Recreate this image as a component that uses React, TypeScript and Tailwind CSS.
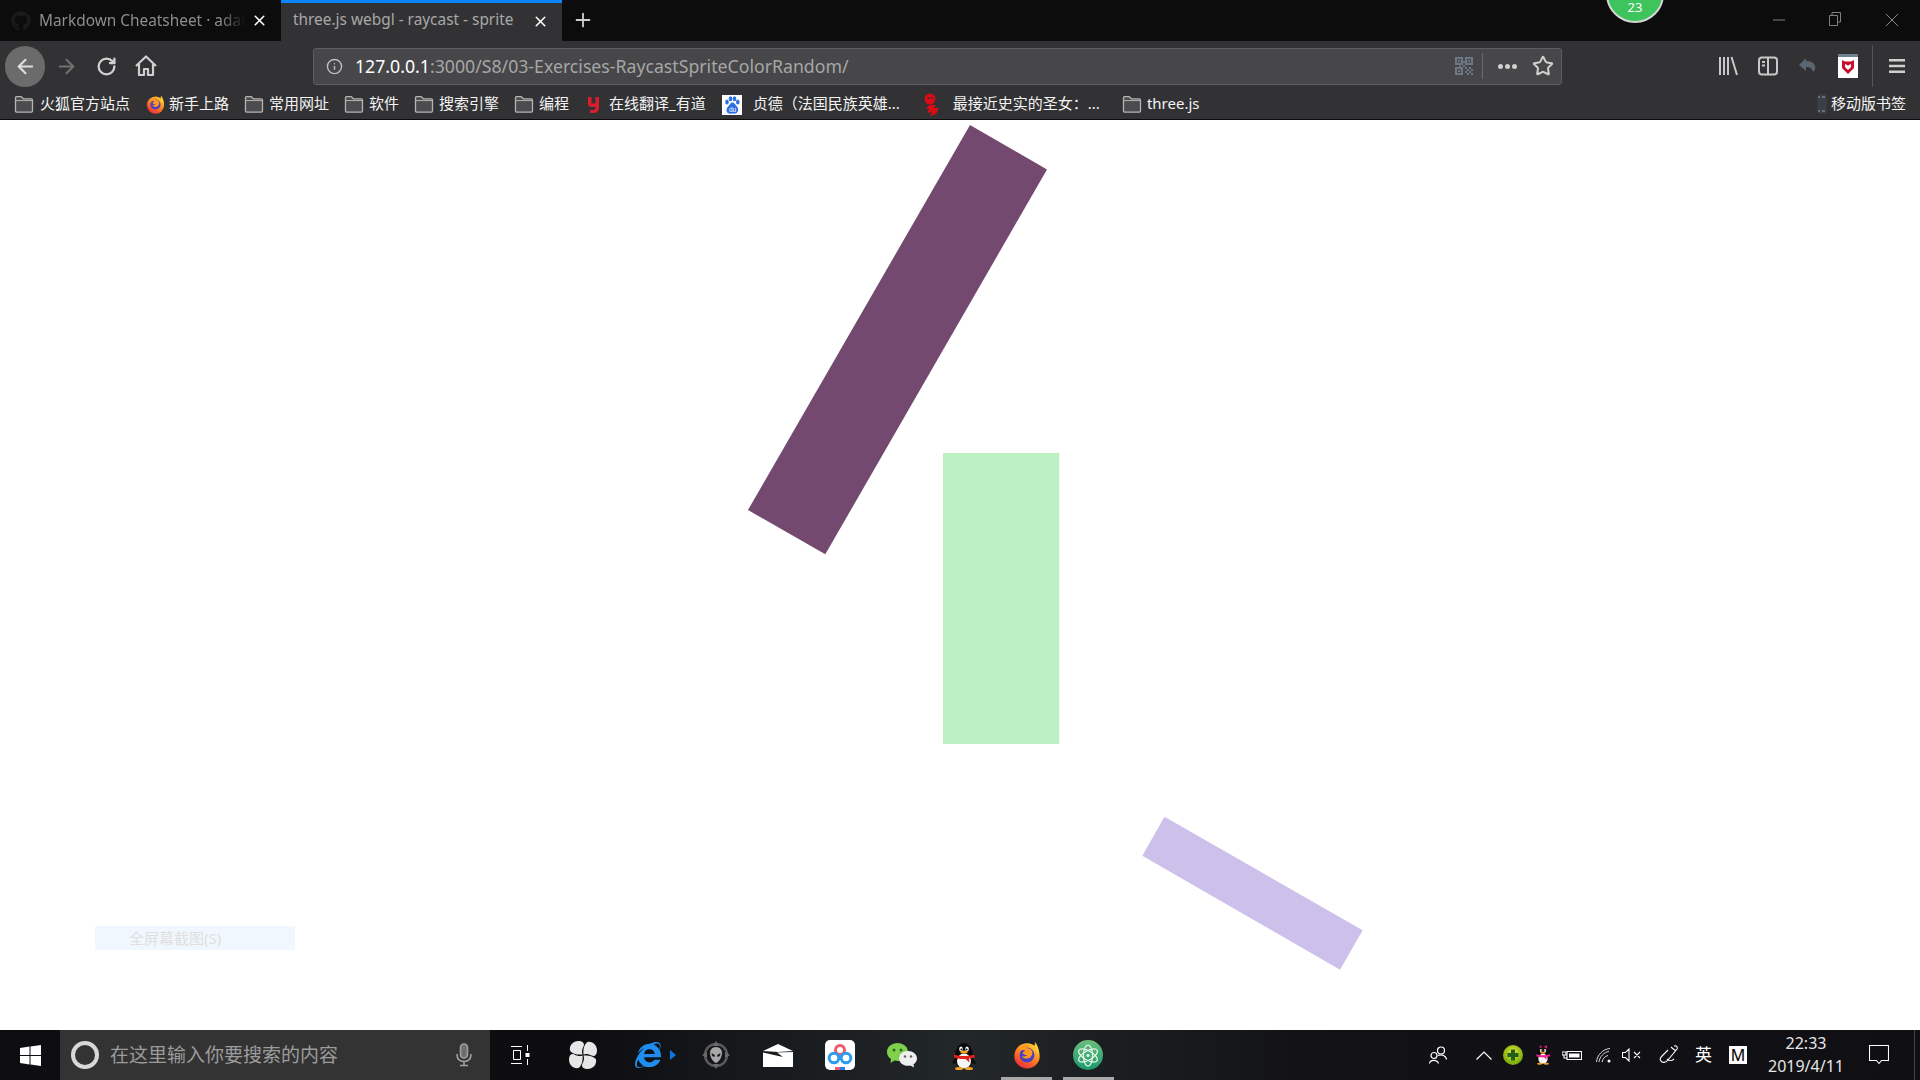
import React from "react";
import { FaGithub, FaInternetExplorer } from "react-icons/fa";
import { ArrowLeft, ArrowRight, Info, Plus, RotateCw, Star, X } from "lucide-react";

function Folder() {
  return (
    <svg width="20" height="20" viewBox="0 0 20 20" className="mb-[1px] shrink-0">
      <path d="M1.5 17V3.8c0-.7.5-1.2 1.2-1.2h4.6l2 2.2h8c.7 0 1.2.5 1.2 1.2V17c0 .6-.5 1.1-1.2 1.1H2.7c-.7 0-1.2-.5-1.2-1.1z" fill="#4c4c4e" stroke="#b4b4b4" strokeWidth="1.3" />
      <path d="M1.5 6.6h17" stroke="#b4b4b4" strokeWidth="1" />
    </svg>
  );
}

function Firefox({ size, id }: { size: number; id: string }) {
  return (
    <svg width={size} height={size} viewBox="0 0 32 32" className="shrink-0">
      <defs>
        <linearGradient id={id} x1="0.8" y1="0" x2="0.2" y2="1">
          <stop offset="0" stopColor="#ffd53a" />
          <stop offset="0.45" stopColor="#ff8a1f" />
          <stop offset="1" stopColor="#e8233f" />
        </linearGradient>
      </defs>
      <circle cx="16" cy="17" r="14.500" fill={`url(#${id})`} />
      <path d="M25 1c3 3 5 8 5 14l-6-5c1-3 1-6 1-9z" fill="#ffcb2f" />
      <circle cx="16" cy="16" r="8.500" fill="#4a3fc2" />
      <path d="M7 8c4-4 10-5 14-3-3 0-5 1-6 3 3 0 6 1 7 4 1 4-2 8-6 8-3 0-5-1-6-3 2 1 5 1 6-1-2 0-5-1-5-3 1-1 2-1 3-2-2-1-4-1-5 0-1-1-2-2-2-3z" fill="#ff9a1f" />
    </svg>
  );
}

function Penguin({ pink }: { pink?: boolean }) {
  const scarf = pink ? "#ee1e8c" : "#e2201c";
  return (
    <svg width={pink ? 16 : 24} height={pink ? 22 : 29} viewBox="0 0 24 29" className="shrink-0">
      {pink && <path d="M12 3 7 0v5zM12 3l6-3v5z" fill="#ee1e8c" />}
      <ellipse cx="12" cy="15" rx="9" ry="13" fill="#0b0b0b" />
      <path d="M3 17 0 22l4 1zM21 17l3 5-4 1z" fill="#0b0b0b" />
      <ellipse cx="12" cy="20" rx="7" ry="7.500" fill="#f5f5f5" />
      <ellipse cx="9" cy="8" rx="1.800" ry="2.600" fill="#fff" />
      <ellipse cx="15" cy="8" rx="1.800" ry="2.600" fill="#fff" />
      <circle cx="9.400" cy="8.400" r="1" fill="#111" />
      <circle cx="14.600" cy="8.400" r="1" fill="#111" />
      <ellipse cx="12" cy="11" rx="3.600" ry="1.500" fill="#f2a51c" />
      <path d="M2 13.500c6 2 14 2 20 0l1 3-6 1 .5 4-4-3.600C9 18.400 5 17.500 2 16.500z" fill={scarf} />
      <ellipse cx="7" cy="27.500" rx="4" ry="1.500" fill="#f2a51c" />
      <ellipse cx="17" cy="27.500" rx="4" ry="1.500" fill="#f2a51c" />
    </svg>
  );
}

function Atom() {
  return (
    <svg width="30" height="30" viewBox="0 0 30 30" className="shrink-0">
      <defs>
        <linearGradient id="atomg" x1="0" y1="0" x2="0" y2="1">
          <stop offset="0" stopColor="#6cbe7c" />
          <stop offset="1" stopColor="#1a9a6c" />
        </linearGradient>
      </defs>
      <circle cx="15" cy="15" r="15" fill="url(#atomg)" />
      <g fill="none" stroke="#e8f6ea" strokeWidth="1.200">
        <ellipse cx="15" cy="15.500" rx="4.500" ry="10.500" />
        <ellipse cx="15" cy="15.500" rx="4.500" ry="10.500" transform="rotate(60 15 15.500)" />
        <ellipse cx="15" cy="15.500" rx="4.500" ry="10.500" transform="rotate(-60 15 15.500)" />
      </g>
      <circle cx="15" cy="15.500" r="1.600" fill="#e8f6ea" />
    </svg>
  );
}

function BookmarkText({ children, className }: { children: React.ReactNode; className: string }) {
  return <span className={`mb-[4px] whitespace-nowrap text-[15px] leading-[20px] text-[#f4f4f4] ${className}`}>{children}</span>;
}

const blade = "M13.500 13.500C9 14 3 13 1 9.500 0 4.500 4 0 9.500 0c4.500 0 6.500 2.500 5 5.500-1.500 2.500-2 5.500-1 8z";

export default function App() {
  return (
    <div className="flex h-screen w-screen flex-col overflow-hidden bg-white font-['Noto_Sans','Noto_Sans_CJK_SC',sans-serif]">
      {/* tab strip */}
      <div className="relative flex h-[41px] shrink-0 bg-[#0c0c0c]">
        <div className="flex w-[281px] items-center pl-[11px]">
          <FaGithub className="h-[20px] w-[20px] shrink-0 text-[#1a1a1a]" />
          <span className="ml-[8px] w-[206px] overflow-hidden whitespace-nowrap text-[15.400px] text-[#8d8d8d] [mask-image:linear-gradient(90deg,#000_88%,transparent)]">
            Markdown Cheatsheet · adam-p
          </span>
          <X className="ml-[6px] h-[17px] w-[17px] text-white" strokeWidth={2.2} />
        </div>
        <div className="flex w-[281px] items-center border-t-[3px] border-[#0a84ff] bg-[#323234] pl-[12px]">
          <span className="mb-[5px] w-[239px] whitespace-nowrap text-[15.400px] text-[#a8a8a8]">three.js webgl - raycast - sprite</span>
          <X className="mb-[2px] h-[17px] w-[17px] text-white" strokeWidth={2.2} />
        </div>
        <div className="ml-[10px] flex items-center">
          <Plus className="mb-[2px] h-[22px] w-[22px] text-[#d0d0d0]" strokeWidth={2} />
        </div>
        <div className="ml-auto flex items-start">
          <svg width="14" height="41" viewBox="0 0 14 41" className="mr-[42px]"><path d="M1 20h12" stroke="#808080" strokeWidth="1" /></svg>
          <svg width="14" height="41" viewBox="0 0 14 41" className="mr-[43px]"><path d="M1.500 15.500h8v10h-8zM4 15V12.500h8.500v9.500H10" fill="none" stroke="#808080" strokeWidth="1" /></svg>
          <svg width="14" height="41" viewBox="0 0 14 41" className="mr-[21px]"><path d="M1 14l12 12M13 14 1 26" stroke="#8a8a8a" strokeWidth="1" /></svg>
        </div>
        <div className="absolute left-[1606px] top-[-35px] flex h-[58px] w-[58px] items-end justify-center rounded-full border-2 border-[#d6d6d6] bg-[#3ec45c] pb-[6px] text-[13px] leading-[16px] text-white">
          23
        </div>
      </div>

      {/* nav toolbar */}
      <div className="flex h-[49px] shrink-0 items-center bg-[#323234] pl-[5px] pt-[1px]">
        <div className="flex h-[41px] w-[40px] items-center justify-center rounded-full bg-[#6b6b6b]">
          <ArrowLeft className="h-[23px] w-[23px] text-[#e0e0e0]" strokeWidth={2.2} />
        </div>
        <ArrowRight className="ml-[10px] h-[23px] w-[23px] text-[#707070]" strokeWidth={2.2} />
        <RotateCw className="ml-[18px] h-[21px] w-[21px] text-[#d0d0d0]" strokeWidth={2.6} />
        <svg width="24" height="24" viewBox="0 0 24 24" className="ml-[17px]" fill="none" stroke="#d0d0d0" strokeWidth="2.200" strokeLinejoin="round">
          <path d="M2 12 12 2.500 22 12M5 10v11h5v-6h4v6h5V10" />
        </svg>
        <div className="ml-[155px] flex h-[37px] w-[1249px] items-center rounded-[3px] border border-[#5e5e60] bg-[#474749] pl-[12px]">
          <Info className="h-[17px] w-[17px] text-[#bdbdbd]" strokeWidth={2} />
          <span className="ml-[12px] whitespace-nowrap text-[17.700px] text-[#a6a6a6]"><span className="text-white">127.0.0.1</span>:3000/S8/03-Exercises-RaycastSpriteColorRandom/</span>
          <svg width="18" height="18" viewBox="0 0 18 18" className="ml-auto" fill="#6d7885">
            <path fillRule="evenodd" d="M0 0h8v8H0zM2 2v4h4V2zM10 0h8v8h-8zM12 2v4h4V2zM0 10h8v8H0zM2 12v4h4v-4z" />
            <path d="M3 3h2v2H3zM13 3h2v2h-2zM3 13h2v2H3zM10 10h2v2h-2zM14 10h2v2h-2zM12 12h2v2h-2zM16 12h2v2h-2zM10 14h2v2h-2zM14 14h2v2h-2zM12 16h2v2h-2zM16 16h2v2h-2zM8 8h2v2H8zM4 8.500h2v1.500H4zM8 4h2v2H8z" />
          </svg>
          <div className="ml-[9px] h-[26px] w-px bg-[#6a6a6c]" />
          <div className="ml-[15px] flex gap-[2px]">
            <div className="h-[5px] w-[5px] rounded-full bg-[#cfcfcf]" />
            <div className="h-[5px] w-[5px] rounded-full bg-[#cfcfcf]" />
            <div className="h-[5px] w-[5px] rounded-full bg-[#cfcfcf]" />
          </div>
          <Star className="ml-[15px] mr-[7px] h-[22px] w-[22px] text-[#d0d0d0]" strokeWidth={2.2} />
        </div>
        <svg width="20" height="20" viewBox="0 0 20 20" className="ml-[156px]" fill="none" stroke="#c8c8c8" strokeWidth="2">
          <path d="M2 1v18M6 1v18M10 1v18M13.500 1 19 19" />
        </svg>
        <svg width="20" height="20" viewBox="0 0 20 20" className="ml-[20px]" fill="none" stroke="#c8c8c8" strokeWidth="2">
          <rect x="1" y="1.500" width="18" height="17" rx="3" />
          <path d="M10 1.500v17M4 6h3M4 9.500h3" />
        </svg>
        <svg width="20" height="20" viewBox="0 0 20 20" className="ml-[20px]" fill="#5c6670">
          <path d="M8 2 1 9l7 6v-4c4 0 6 1 7 5 1-1 3-3 2-6-1-4-5-5-9-5z" />
        </svg>
        <div className="ml-[20px] flex h-[24px] w-[20px] flex-col items-center bg-white">
          <div className="h-[3px] w-full bg-[#6d8290]" />
          <svg width="14" height="16" viewBox="0 0 14 16" className="mt-[2px]"><path d="M1 1l3 1.500h6L13 1v8l-6 6-6-6zM4 5v3l3 3 3-3V5L7 6.500z" fill="#c8102e" fillRule="evenodd" /></svg>
        </div>
        <div className="ml-[14px] h-[42px] w-px bg-[#555557]" />
        <svg width="16" height="16" viewBox="0 0 16 16" className="ml-[16px]" fill="#cfcfcf">
          <path d="M0 1h16v2.500H0zM0 6.800h16v2.500H0zM0 12.500h16V15H0z" />
        </svg>
      </div>

      {/* bookmarks */}
      <div className="flex h-[30px] shrink-0 items-center border-b border-[#0c0c0c] bg-[#323234] pl-[14px]">
        <Folder /><BookmarkText className="ml-[6px]">火狐官方站点</BookmarkText>
        <div className="ml-[16px]"><Firefox size={19} id="ffa" /></div><BookmarkText className="ml-[4px]">新手上路</BookmarkText>
        <div className="ml-[15px]"><Folder /></div><BookmarkText className="ml-[5px]">常用网址</BookmarkText>
        <div className="ml-[15px]"><Folder /></div><BookmarkText className="ml-[5px]">软件</BookmarkText>
        <div className="ml-[15px]"><Folder /></div><BookmarkText className="ml-[5px]">搜索引擎</BookmarkText>
        <div className="ml-[15px]"><Folder /></div><BookmarkText className="ml-[5px]">编程</BookmarkText>
        <svg width="13" height="18" viewBox="0 0 13 18" className="ml-[18px]"><path d="M1 1h3.500v6.500h4V1H12v10c0 4-2 6-6 6H3v-3h3c2 0 2.500-1 2.500-3h-4C2 11 1 9.500 1 7.500z" fill="#d81e2c" /></svg>
        <BookmarkText className="ml-[9px]">在线翻译_有道</BookmarkText>
        <svg width="20" height="20" viewBox="0 0 20 20" className="ml-[16px]">
          <rect width="20" height="20" fill="#fff" />
          <g fill="#2f6fe4">
            <ellipse cx="5" cy="7" rx="1.800" ry="2.500" /><ellipse cx="8.500" cy="3.800" rx="1.800" ry="2.500" /><ellipse cx="12.500" cy="3.800" rx="1.800" ry="2.500" /><ellipse cx="15.800" cy="7" rx="1.800" ry="2.500" />
            <path d="M10.500 7.500c2 0 2.500 2 4 3.500s2 3 1.500 5-2.500 3-5.500 2.500c-3 .5-5 0-5.800-2-.6-2 .3-4 1.800-5.500s2-3.500 4-3.500z" />
          </g>
          <text x="10.500" y="16.500" fontSize="6.500" fill="#fff" textAnchor="middle" fontFamily="Liberation Sans">du</text>
        </svg>
        <BookmarkText className="ml-[11px]">贞德（法国民族英雄...</BookmarkText>
        <svg width="17" height="24" viewBox="0 0 17 24" className="ml-[24px]" fill="#d80c12">
          <circle cx="6" cy="6" r="5.500" /><path d="M5 12h7l-2 3h5l-3 6-6 2 2-4-5 1 2-4H2z" />
          <circle cx="4.500" cy="5" r="1" fill="#323234" /><circle cx="8" cy="5" r="1" fill="#323234" />
        </svg>
        <BookmarkText className="ml-[12px]">最接近史实的圣女：...</BookmarkText>
        <div className="ml-[22px]"><Folder /></div><BookmarkText className="ml-[5px]">three.js</BookmarkText>
        <div className="ml-auto mr-[14px] flex items-center">
          <svg width="10" height="20" viewBox="0 0 10 20" className="mb-[1px]">
            <rect x="0.500" y="0.500" width="9" height="19" rx="2" fill="#3a4046" />
            <path d="M1 2h2v2H1zM5 2h3v2H5zM1 16h2v2H1zM5 16h3v2H5z" fill="#5e7480" />
          </svg>
          <BookmarkText className="ml-[4px]">移动版书签</BookmarkText>
        </div>
      </div>

      {/* page: the webgl canvas */}
      <div className="relative min-h-0 flex-1 bg-white">
        <svg className="block h-full w-full" viewBox="0 120 1920 910" preserveAspectRatio="none">
          <polygon points="970,125 1047,169.500 825.300,554.300 748,510" fill="#734970" />
          <rect x="943" y="453" width="116.300" height="291" fill="#bcf0c2" />
          <polygon points="1164.500,816.700 1362.700,930.300 1340,969.700 1142.300,855.700" fill="#cdc1ec" />
        </svg>
        <div className="absolute left-[95px] top-[806px] flex h-[24px] w-[200px] items-center bg-[#f0f7fe] pl-[34px] text-[15px] text-[#e0e0e0]">
          全屏幕截图(S)
        </div>
      </div>

      {/* windows taskbar */}
      <div className="relative flex h-[50px] shrink-0 items-center bg-[linear-gradient(90deg,#0e0e12_0%,#0d0d10_30%,#22272a_50%,#121215_68%,#100f14_100%)]">
        <div className="flex h-full w-[60px] items-center justify-center">
          <svg width="21" height="21" viewBox="0 0 21 21" fill="#fff">
            <path d="M0 3l9.500-1.400v8.300H0zM10.500 1.500 21 0v9.900H10.500zM0 11h9.500v8.400L0 18zM10.500 11H21v10l-10.500-1.500z" />
          </svg>
        </div>
        <div className="flex h-full w-[430px] items-center bg-[#333333] pl-[11px]">
          <div className="h-[28px] w-[28px] rounded-full border-[4px] border-[#d8d8d8]" />
          <span className="ml-[11px] text-[19px] text-[#9c9c9c]">在这里输入你要搜索的内容</span>
          <svg width="16" height="24" viewBox="0 0 16 24" className="ml-auto mr-[18px]" fill="none" stroke="#a0a0a0" strokeWidth="1.600">
            <rect x="4.500" y="1" width="7" height="14" rx="3.500" fill="#6e6e6e" />
            <path d="M1 11c0 5 3 7.500 7 7.500s7-2.500 7-7.500M8 18.500V22M4 22.500h8" />
          </svg>
        </div>
        <svg width="20" height="20" viewBox="0 0 20 20" className="ml-[20px]" fill="none" stroke="#fff" strokeWidth="1">
          <path d="M1 1.500h11M1 18.500h11M3.500 5.500h7v9h-7zM17.500 0v6M17.500 14v6" />
          <path d="M15.500 8h4v4h-4z" fill="#fff" stroke="none" />
        </svg>
        <svg width="28" height="28" viewBox="0 0 28 28" className="ml-[39px]" fill="#e6e6e6">
          <path d={blade} />
          <path d={blade} transform="rotate(90 14 14)" />
          <path d={blade} transform="rotate(180 14 14)" />
          <path d={blade} transform="rotate(270 14 14)" />
        </svg>
        <FaInternetExplorer className="ml-[38px] h-[26px] w-[26px] text-[#1f8cf0]" />
        <svg width="6" height="10" viewBox="0 0 6 10" className="ml-[9px]"><path d="M0 0l6 5-6 5z" fill="#0a78e0" /></svg>
        <svg width="28" height="28" viewBox="0 0 28 28" className="ml-[26px]">
          <circle cx="14" cy="14" r="11" fill="none" stroke="#5a5a5a" strokeWidth="2.500" />
          <path d="M14 0l3 5h-6zM14 28l3-5h-6zM0 14l5-3v6zM28 14l-5-3v6z" fill="#6a6a6a" />
          <path d="M14 6c4 0 6 3 6 6 0 4-3 9-6 10-3-1-6-6-6-10 0-3 2-6 6-6z" fill="#a8a8a8" />
          <path d="M9.500 12l3.500 2-.5 2-2.500-1zM18.500 12 15 14l.5 2 2.500-1z" fill="#222" />
        </svg>
        <svg width="30" height="23" viewBox="0 0 30 23" className="ml-[33px]" fill="#fff">
          <path d="M0 7 15 0l15 7-15 1z" />
          <path d="M0 8.500 20 13 14 8.500 30 8v15H0z" />
        </svg>
        <svg width="30" height="30" viewBox="0 0 30 30" className="ml-[32px]">
          <rect width="30" height="30" rx="5" fill="#fff" />
          <g fill="none" strokeWidth="3">
            <circle cx="15" cy="10" r="4.500" stroke="#ee5a6a" />
            <circle cx="9" cy="18" r="4.800" stroke="#2c9cf0" />
            <circle cx="21" cy="18" r="4.800" stroke="#2c9cf0" />
          </g>
          <rect x="10" y="27" width="5" height="3" fill="#ee5a6a" />
          <rect x="15" y="27" width="5" height="3" fill="#2c7cf0" />
        </svg>
        <svg width="30" height="25" viewBox="0 0 30 25" className="ml-[32px]">
          <path d="M10.500 0C16 0 21 3.500 21 9s-5 9-10.500 9c-1 0-2-.1-3-.4L3.500 20 4 16C1.500 14.500 0 12 0 9 0 3.500 5 0 10.500 0z" fill="#7fd04a" />
          <circle cx="7" cy="7" r="1.500" fill="#2a6a20" /><circle cx="14" cy="7" r="1.500" fill="#2a6a20" />
          <path d="M21 8c5 0 9 3.200 9 7.500 0 2.500-1.300 4.500-3.500 5.800l.5 3.200-3.500-2c-.8.200-1.600.3-2.500.3-5 0-9-3.200-9-7.300S16 8 21 8z" fill="#efefef" />
          <circle cx="18" cy="13.500" r="1.300" fill="#666" /><circle cx="24" cy="13.500" r="1.300" fill="#666" />
        </svg>
        <div className="ml-[35px]"><Penguin /></div>
        <div className="ml-[37px] flex flex-col"><Firefox size={28} id="ffb" /></div>
        <div className="ml-[32px]"><Atom /></div>

        {/* tray */}
        <svg width="18" height="18" viewBox="0 0 18 18" className="ml-[326px]" fill="none" stroke="#fff" strokeWidth="1.200">
          <circle cx="12" cy="4.500" r="3.500" /><path d="M9 9.500c4-1.500 8 0 8.500 4" /><circle cx="5" cy="9.500" r="3" /><path d="M.5 17.500c.5-4 7.500-4.500 9 0" />
        </svg>
        <svg width="16" height="9" viewBox="0 0 16 9" className="ml-[29px]" fill="none" stroke="#fff" strokeWidth="1.200"><path d="M.5 8.500 8 1l7.500 7.500" /></svg>
        <svg width="20" height="20" viewBox="0 0 20 20" className="ml-[11px]">
          <defs><radialGradient id="g360" cx="0.5" cy="0.4"><stop offset="0" stopColor="#f3ea3a" /><stop offset="1" stopColor="#7fb00f" /></radialGradient></defs>
          <circle cx="10" cy="10" r="10" fill="url(#g360)" />
          <path d="M8 4.500h4V8h3.500v4H12v3.500H8V12H4.500V8H8z" fill="#20601a" />
        </svg>
        <div className="ml-[12px]"><Penguin pink /></div>
        <svg width="20" height="12" viewBox="0 0 20 12" className="ml-[11px]" fill="none" stroke="#fff" strokeWidth="1.100">
          <path d="M5 2.500h14.500v8H5z" /><path d="M7 4.500h10.500v4H7z" fill="#fff" stroke="none" /><path d="M0 3h4v3H0zM2 6v3h3" />
        </svg>
        <svg width="15" height="15" viewBox="0 0 15 15" className="ml-[14px]" fill="none" stroke="#d8d8d8" strokeWidth="1">
          <path d="M.5 14C1 7 7 1 14 .5M3 14c.5-5 5-10 10-10.500M6 14c.5-3 3-6 6-6.500" /><circle cx="13" cy="13" r="1.500" fill="#fff" stroke="none" />
        </svg>
        <svg width="19" height="14" viewBox="0 0 19 14" className="ml-[11px]" fill="none" stroke="#fff" strokeWidth="1.100">
          <path d="M.5 4.500h3L7 1v12L3.500 9.500h-3zM12 4l6 6M18 4l-6 6" />
        </svg>
        <svg width="20" height="20" viewBox="0 0 20 20" className="ml-[18px]" fill="none" stroke="#fff" strokeWidth="1.100">
          <path d="M15 1c2-1 4 1 3 3l-9 11c-2 3-6 3-7 1-1-1-1-3 1-5l6-6M12 2c2 2 4 3 5 4M8 14c2 2 5 2 7 0" />
        </svg>
        <span className="ml-[16px] text-[17px] leading-[20px] text-white">英</span>
        <div className="ml-[17px] flex h-[18px] w-[18px] items-center justify-center bg-white text-[16px] leading-[18px] text-black">M</div>
        <div className="ml-[19px] flex w-[80px] flex-col items-center text-[16px] leading-[23px] text-[#e6e6e6]">
          <span>22:33</span>
          <span>2019/4/11</span>
        </div>
        <svg width="20" height="21" viewBox="0 0 20 21" className="ml-[23px]" fill="none" stroke="#fff" strokeWidth="1.100">
          <path d="M.5.500h19v15h-7l-2.500 3-2.500-3h-7z" />
        </svg>
        <div className="ml-auto h-full w-[6px] border-l border-[#444]" />
        <div className="absolute bottom-0 left-[1001px] h-[3px] w-[51px] bg-[#a8a8a8]" />
        <div className="absolute bottom-0 left-[1063px] h-[3px] w-[51px] bg-[#a8a8a8]" />
      </div>
    </div>
  );
}
